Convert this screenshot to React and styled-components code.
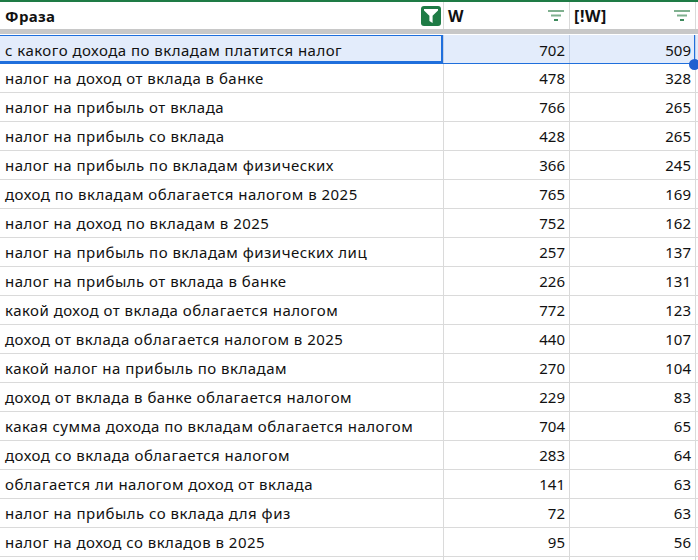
import React from 'react';
import styled, { createGlobalStyle } from 'styled-components';

const Global = createGlobalStyle`
  html, body { margin: 0; padding: 0; background: #fff; overflow: hidden; }
  body { font-family: "Noto Sans", "Open Sans", sans-serif; }
`;

const Sheet = styled.div`
  width: 698px;
  height: 560px;
  overflow: hidden;
  border-top: 2px solid #1e7b45;
  box-sizing: border-box;
`;

const Header = styled.div`
  display: grid;
  grid-template-columns: 444px 126px 126px;
  height: 27px;
  border-bottom: 5px solid #c8c8c8;
`;

const HeadCell = styled.div`
  display: flex;
  align-items: center;
  justify-content: space-between;
  box-sizing: border-box;
  padding: 0 ${p => (p.$first ? 2 : 5)}px 0 ${p => (p.$first ? 5 : 4)}px;
  border-right: 1px solid #dadada;
  font-size: ${p => (p.$first ? 15 : 16)}px;
  font-weight: 700;
  letter-spacing: ${p => (p.$first ? 0.35 : 0.6)}px;
  color: #111;
`;

const FilterBadge = styled.span`
  display: flex;
  align-items: center;
  justify-content: center;
  width: 20px;
  height: 20px;
  border-radius: 3px;
  background: #1e7b45;
`;

const Row = styled.div`
  display: grid;
  grid-template-columns: 444px 126px 126px;
  height: ${p => (p.$selected ? 30 : 29)}px;
  box-sizing: border-box;
  border-bottom: 1px solid ${p => (p.$selected ? '#1f6fdc' : '#dadada')};
  ${p => p.$selected && `
    border-top: 1px solid #fff;
    background: #e3ecfb;
  `}
`;

const Phrase = styled.div`
  display: flex;
  align-items: center;
  box-sizing: border-box;
  padding: ${p => (p.$selected ? 2 : 0)}px 0 0 5px;
  font-size: 15px;
  letter-spacing: 0.48px;
  color: #111;
  white-space: nowrap;
  border-right: 1px solid ${p => (p.$selected ? '#c2d0e6' : '#dadada')};
  ${p => p.$selected && 'box-shadow: inset -2px -2px 0 #1f6fdc, inset 0 1px 0 #1f6fdc;'}
`;

const Num = styled.div`
  display: flex;
  align-items: center;
  justify-content: flex-end;
  box-sizing: border-box;
  padding: ${p => (p.$selected ? 2 : 0)}px 4px 0 0;
  font-size: 15px;
  color: #111;
  border-right: 1px solid ${p => (p.$selected ? '#c2d0e6' : '#dadada')};
  ${p => p.$edge && 'box-shadow: inset -1px 0 0 #1f6fdc;'}
`;

const Body = styled.div`
  position: relative;
`;

const Handle = styled.span`
  position: absolute;
  left: 689px;
  top: 25px;
  width: 11px;
  height: 11px;
  border-radius: 50%;
  background: #1f5fd0;
`;

const FilterLines = () => (
  <svg width="16" height="11" viewBox="0 0 16 11">
    <path d="M0 1h16" stroke="#7fb08f" strokeWidth="2" />
    <path d="M3 5.5h10" stroke="#7fb08f" strokeWidth="2" />
    <path d="M6 10h4" stroke="#3d8a5c" strokeWidth="2" />
  </svg>
);

const FunnelIcon = () => (
  <svg width="14" height="14" viewBox="0 0 14 14">
    <path d="M0 0h14v1.5L8.6 6.8V14L5.4 12V6.8L0 1.5z" fill="#fff" />
  </svg>
);

const rows = [
  ['с какого дохода по вкладам платится налог', 702, 509],
  ['налог на доход от вклада в банке', 478, 328],
  ['налог на прибыль от вклада', 766, 265],
  ['налог на прибыль со вклада', 428, 265],
  ['налог на прибыль по вкладам физических', 366, 245],
  ['доход по вкладам облагается налогом в 2025', 765, 169],
  ['налог на доход по вкладам в 2025', 752, 162],
  ['налог на прибыль по вкладам физических лиц', 257, 137],
  ['налог на прибыль от вклада в банке', 226, 131],
  ['какой доход от вклада облагается налогом', 772, 123],
  ['доход от вклада облагается налогом в 2025', 440, 107],
  ['какой налог на прибыль по вкладам', 270, 104],
  ['доход от вклада в банке облагается налогом', 229, 83],
  ['какая сумма дохода по вкладам облагается налогом', 704, 65],
  ['доход со вклада облагается налогом', 283, 64],
  ['облагается ли налогом доход от вклада', 141, 63],
  ['налог на прибыль со вклада для физ', 72, 63],
  ['налог на доход со вкладов в 2025', 95, 56],
  ['', '', ''],
];

export default function App() {
  return (
    <Sheet>
      <Global />
      <Header>
        <HeadCell $first>
          Фраза
          <FilterBadge><FunnelIcon /></FilterBadge>
        </HeadCell>
        <HeadCell>W<FilterLines /></HeadCell>
        <HeadCell>[!W]<FilterLines /></HeadCell>
      </Header>
      <Body>
        {rows.map((r, i) => (
          <Row key={i} $selected={i === 0}>
            <Phrase $selected={i === 0}>{r[0]}</Phrase>
            <Num $selected={i === 0}>{r[1]}</Num>
            <Num $selected={i === 0} $edge={i === 0}>{r[2]}</Num>
          </Row>
        ))}
        <Handle />
      </Body>
    </Sheet>
  );
}
